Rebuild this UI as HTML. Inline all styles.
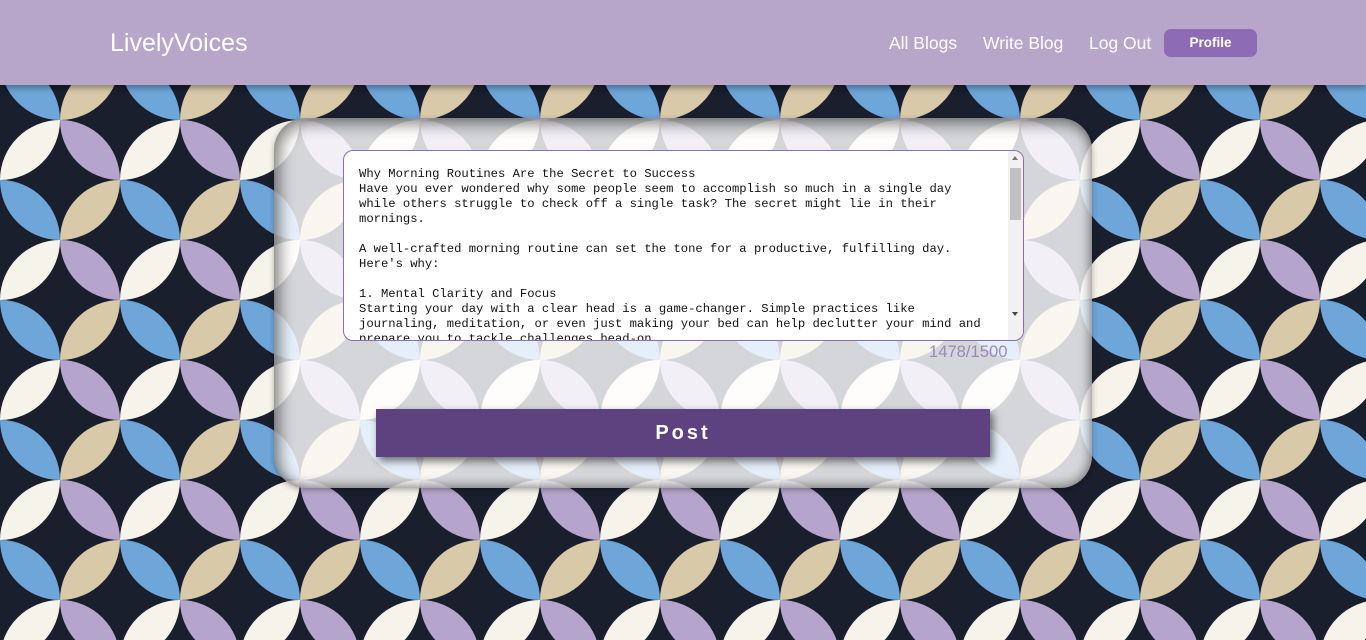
<!DOCTYPE html>
<html><head><meta charset="utf-8"><style>
*{margin:0;padding:0;box-sizing:border-box}
body{width:1366px;height:640px;overflow:hidden;position:relative;font-family:"Liberation Sans",sans-serif;background:#1a1f2e}
#bg{position:absolute;left:0;top:0}
.nav{position:absolute;left:0;top:0;width:1366px;height:85px;background:#b7a6c9;box-shadow:0 3px 6px rgba(0,0,0,.35);z-index:2}
.logo{position:absolute;left:110px;top:29px;color:#fff;font-size:25px}
.lnk{position:absolute;top:33px;color:#fff;font-size:17.5px}
.prof{position:absolute;left:1164px;top:29px;width:93px;height:28px;background:#8d6bb5;border-radius:7px;color:#fff;font-size:13.5px;font-weight:bold;text-align:center;line-height:28px}
.card{position:absolute;left:274px;top:118px;width:818px;height:370px;border-radius:32px;background:rgba(255,255,255,.82);box-shadow:inset 4px 4px 14px 3px rgba(0,0,0,.4),inset -2px -2px 10px rgba(0,0,0,.25),0 2px 6px rgba(0,0,0,.3)}
.ta{position:absolute;left:343px;top:150px;width:681px;height:191px;background:#fff;border:1px solid #8a6fb0;border-radius:10px;overflow:hidden}
.txt{position:absolute;left:15px;top:16px;width:640px;font-family:"Liberation Mono",monospace;font-size:12.2px;line-height:15px;white-space:pre;color:#111}
.sb{position:absolute;right:0;top:0;width:15px;height:189px;background:#f1f1f1}
.th{position:absolute;right:2px;top:17px;width:11px;height:52px;background:#c1c1c1}
.cnt{position:absolute;left:929px;top:342px;color:#9a88b8;font-size:16.6px}
.post{position:absolute;left:376px;top:409px;width:614px;height:48px;background:#5e4280;color:#fff;font-weight:bold;font-size:20px;letter-spacing:3px;text-align:center;line-height:48px;box-shadow:3px 4px 8px rgba(0,0,0,.55)}
</style></head><body>
<svg id="bg" width="1366" height="640">
<defs><pattern id="p" width="120" height="120" patternUnits="userSpaceOnUse">
<rect width="120" height="120" fill="#1a1f2e"/>
<path d="M0 60A60 60 0 0 1 60 0A60 60 0 0 1 0 60Z" fill="#f6f4ea"/>
<path d="M60 0A60 60 0 0 1 120 60A60 60 0 0 1 60 0Z" fill="#b5a5cc"/>
<path d="M0 60A60 60 0 0 0 60 120A60 60 0 0 0 0 60Z" fill="#6ea6da"/>
<path d="M60 120A60 60 0 0 1 120 60A60 60 0 0 1 60 120Z" fill="#d8caa8"/>
</pattern></defs>
<rect width="1366" height="640" fill="url(#p)"/>
</svg>
<div class="nav">
<div class="logo">LivelyVoices</div>
<div class="lnk" style="left:889px">All Blogs</div>
<div class="lnk" style="left:983px">Write Blog</div>
<div class="lnk" style="left:1089px">Log Out</div>
<div class="prof">Profile</div>
</div>
<div class="card"></div>
<div class="ta"><div class="txt">Why Morning Routines Are the Secret to Success
Have you ever wondered why some people seem to accomplish so much in a single day
while others struggle to check off a single task? The secret might lie in their
mornings.

A well-crafted morning routine can set the tone for a productive, fulfilling day.
Here's why:

1. Mental Clarity and Focus
Starting your day with a clear head is a game-changer. Simple practices like
journaling, meditation, or even just making your bed can help declutter your mind and
prepare you to tackle challenges head-on.</div>
<div class="sb"><div class="th"></div><div style="position:absolute;left:4px;top:5px;border:3.5px solid transparent;border-bottom:4px solid #777;border-top:0"></div><div style="position:absolute;left:4px;top:161px;border:3.5px solid transparent;border-top:4px solid #444;border-bottom:0"></div></div>
</div>
<div class="cnt">1478/1500</div>
<div class="post">Post</div>
</body></html>
